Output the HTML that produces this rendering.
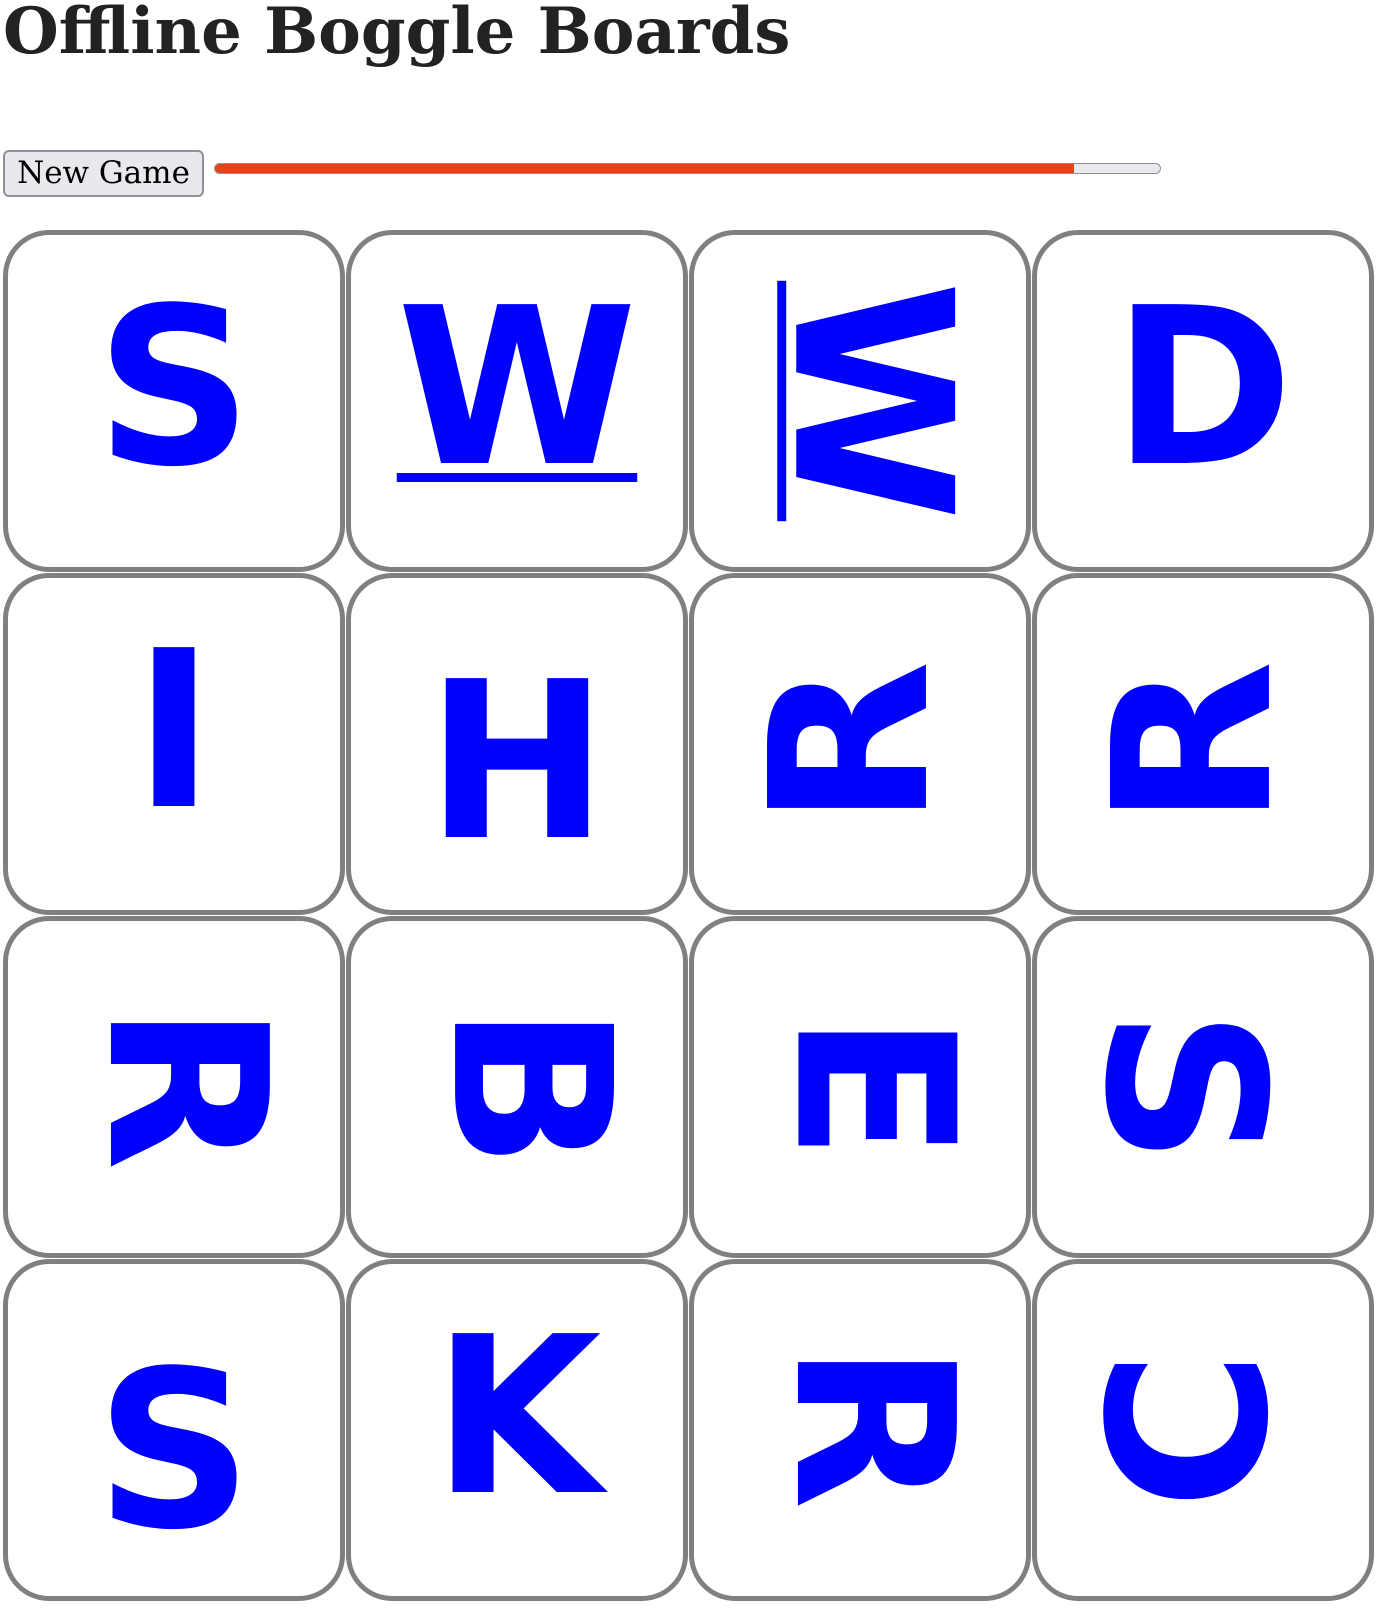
<!DOCTYPE html>
<html><head><meta charset="utf-8"><style>
body{margin:0;background:#fff;width:1390px;height:1614px;overflow:hidden;position:relative;font-family:"DejaVu Serif",serif}
h1{position:absolute;left:3px;top:0px;margin:0;font:bold 64px/1 "DejaVu Serif",serif;color:#222;white-space:nowrap}
.btn{position:absolute;left:3px;top:150px;width:201px;height:47px;box-sizing:border-box;border:2px solid #8f8f9d;border-radius:6px;background:#e9e9ed;font:31px "DejaVu Serif",serif;color:#000;text-align:center;line-height:42px}
.bar{position:absolute;left:214px;top:163px;width:947px;height:11px;border-radius:6px;background:#e9e9ed;border:1px solid #8f8f9d;box-sizing:border-box;overflow:hidden}
.bar div{height:100%;width:90.9%;background:#dd4814}
.grid{position:absolute;left:3px;top:230px;}
.t{position:absolute;width:342px;height:342px;box-sizing:border-box;border:5px solid #808080;border-radius:46px;background:#fff;display:flex;align-items:center;justify-content:center;overflow:hidden}
.t span{font:bold 218px/1 "DejaVu Sans",sans-serif;color:#0000ff;display:block}
</style></head><body>
<h1>Offline Boggle Boards</h1>
<div class="btn">New Game</div>
<div class="bar"><div></div></div>
<div class="grid">
<div class="t" style="left:0;top:0"><span style="transform:translateY(-12px)">S</span></div>
<div class="t" style="left:343px;top:0"><span style="transform:translateY(-12px);text-decoration:underline;text-decoration-thickness:9px;text-underline-offset:10px">W</span></div>
<div class="t" style="left:686px;top:0"><span style="transform:translate(10px,0) rotate(90deg);text-decoration:underline;text-decoration-thickness:9px;text-underline-offset:10px">W</span></div>
<div class="t" style="left:1029px;top:0"><span style="transform:translateY(-12px)">D</span></div>
<div class="t" style="left:0;top:343px"><span style="transform:translateY(-12px)">I</span></div>
<div class="t" style="left:343px;top:343px"><span style="transform:translateY(19px)">H</span></div>
<div class="t" style="left:686px;top:343px"><span style="transform:translate(-8px,0) rotate(-90deg)">R</span></div>
<div class="t" style="left:1029px;top:343px"><span style="transform:translate(-8px,0) rotate(-90deg)">R</span></div>
<div class="t" style="left:0;top:686px"><span style="transform:translate(11px,0) rotate(90deg)">R</span></div>
<div class="t" style="left:343px;top:686px"><span style="transform:translate(12px,0) rotate(90deg)">B</span></div>
<div class="t" style="left:686px;top:686px"><span style="transform:translate(12px,0) rotate(90deg)">E</span></div>
<div class="t" style="left:1029px;top:686px"><span style="transform:translate(-20px,0) rotate(90deg)">S</span></div>
<div class="t" style="left:0;top:1029px"><span style="transform:translateY(22px)">S</span></div>
<div class="t" style="left:343px;top:1029px"><span style="transform:translateY(-12px)">K</span></div>
<div class="t" style="left:686px;top:1029px"><span style="transform:translate(12px,-4px) rotate(90deg)">R</span></div>
<div class="t" style="left:1029px;top:1029px"><span style="transform:translate(-12px,0) rotate(-90deg)">C</span></div>
</div>
</body></html>
